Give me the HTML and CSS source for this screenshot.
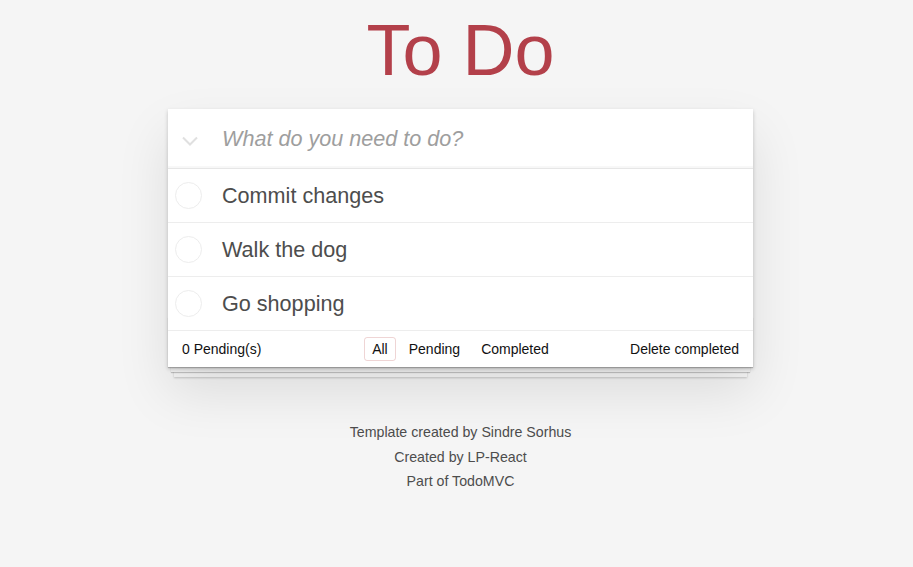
FILE: index.html
```html
<!DOCTYPE html>
<html lang="en">
<head>
<meta charset="utf-8">
<title>To Do</title>
<link rel="stylesheet" href="styles.css">
</head>
<body>
<div class="page">
  <h1 class="title">To Do</h1>
  <section class="card">
    <header class="new-row">
      <span class="toggle-all">
        <svg width="16" height="10" viewBox="0 0 16 10"><polyline points="1,1.5 8,8.5 15,1.5" fill="none" stroke="#e0e0e0" stroke-width="2"/></svg>
      </span>
      <input class="new-todo" type="text" placeholder="What do you need to do?">
    </header>
    <ul class="list">
      <li class="item"><span class="check"></span><span class="label">Commit changes</span></li>
      <li class="item"><span class="check"></span><span class="label">Walk the dog</span></li>
      <li class="item"><span class="check"></span><span class="label">Go shopping</span></li>
    </ul>
    <footer class="footer">
      <span class="count">0 Pending(s)</span>
      <nav class="filters">
        <a class="filter selected">All</a>
        <a class="filter">Pending</a>
        <a class="filter">Completed</a>
      </nav>
      <a class="clear">Delete completed</a>
    </footer>
  </section>
  <div class="info">
    <p>Template created by Sindre Sorhus</p>
    <p>Created by LP-React</p>
    <p>Part of TodoMVC</p>
  </div>
</div>
</body>
</html>
```
FILE: styles.css
```css
html, body {
  margin: 0;
  padding: 0;
}
body {
  background: #f5f5f5;
  font-family: "Liberation Sans", Arial, sans-serif;
  color: #4d4d4d;
}
.page {
  padding-left: 8px;
  text-align: center;
}
.title {
  margin: 14px 0 23px;
  font-size: 72px;
  line-height: 72px;
  font-weight: normal;
  color: #b3404a;
}
.card {
  position: relative;
  width: 585px;
  margin: 0 auto;
  background: #fff;
  text-align: left;
  box-shadow: 0 2px 4px rgba(0,0,0,0.2), 0 25px 50px 0 rgba(0,0,0,0.1);
}
.new-row {
  display: flex;
  align-items: center;
  height: 59px;
  border-bottom: 1px solid #e6e6e6;
  box-shadow: inset 0 -2px 1px rgba(0,0,0,0.03);
}
.toggle-all {
  display: flex;
  width: 40px;
  padding-left: 14px;
  padding-top: 4px;
}
.new-todo {
  flex: 1;
  border: 0;
  outline: none;
  padding: 0;
  margin: 0;
  background: transparent;
  font-family: "Liberation Sans", Arial, sans-serif;
  font-size: 21.6px;
  color: #4d4d4d;
}
.new-todo::placeholder {
  font-style: italic;
  color: #9e9e9e;
}
.list {
  list-style: none;
  margin: 0;
  padding: 0;
}
.item {
  display: flex;
  align-items: center;
  height: 53px;
  border-bottom: 1px solid #ededed;
}
.check {
  width: 25px;
  height: 25px;
  margin-left: 7px;
  border: 1px solid #ededed;
  border-radius: 50%;
}
.label {
  margin-left: 20px;
  font-size: 21.6px;
  color: #4d4d4d;
}
.footer {
  position: relative;
  display: grid;
  grid-template-columns: 1fr auto 1fr;
  align-items: center;
  height: 36px;
  padding: 0 14px;
  font-size: 14px;
  color: #111;
}
.footer::before {
  content: "";
  position: absolute;
  left: 0;
  right: 0;
  bottom: 0;
  height: 50px;
  overflow: hidden;
  z-index: -1;
  box-shadow: 0 1px 1px rgba(0,0,0,0.2),
              0 8px 0 -3px #f6f6f6,
              0 9px 1px -3px rgba(0,0,0,0.2),
              0 16px 0 -6px #f6f6f6,
              0 17px 2px -6px rgba(0,0,0,0.2);
}
.count {
  justify-self: start;
}
.filters {
  display: flex;
  gap: 5px;
  margin-top: -1px;
}
.filter {
  padding: 3px 7px;
  border: 1px solid transparent;
  border-radius: 3px;
  color: #111;
}
.filter.selected {
  border-color: rgba(175,47,47,0.2);
}
.clear {
  justify-self: end;
  color: #111;
}
.info {
  margin-top: 53px;
  font-size: 14.2px;
  line-height: 24.5px;
  color: #4d4d4d;
}
.info p {
  margin: 0;
}
```
